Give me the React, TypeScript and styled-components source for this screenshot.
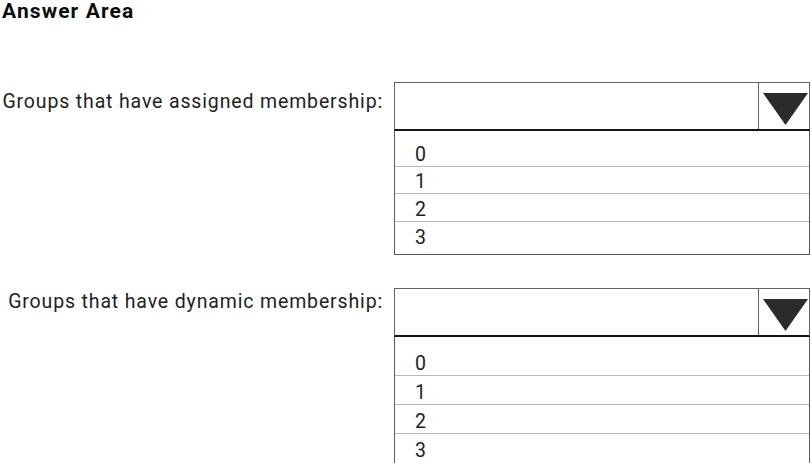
import React from 'react';
import styled, { createGlobalStyle } from 'styled-components';

const GlobalStyle = createGlobalStyle`
  html, body {
    margin: 0;
    padding: 0;
    background: #ffffff;
  }
  body {
    font-family: Roboto, 'Liberation Sans', Arial, sans-serif;
    color: #1c1c1c;
  }
`;

const Page = styled.div`
  width: 811px;
  height: 463px;
  overflow: hidden;
  box-sizing: border-box;
  padding-left: 1px;
`;

const Title = styled.h1`
  margin: 0;
  padding-left: 1px;
  font-size: 21px;
  line-height: 22px;
  letter-spacing: 1.1px;
  font-weight: 700;
  color: #0d0d0d;
`;

const Question = styled.div<{ top: number }>`
  display: flex;
  align-items: flex-start;
  margin-top: ${p => p.top}px;
`;

const Label = styled.div<{ offset: number }>`
  width: 382px;
  margin-right: 11px;
  margin-top: ${p => p.offset}px;
  text-align: right;
  font-size: 19.5px;
  line-height: 22px;
  letter-spacing: 0.85px;
  color: #1e1e1e;
  white-space: nowrap;
`;

const Widget = styled.div`
  width: 416px;
  display: flex;
  flex-direction: column;
`;

const SelectBox = styled.div`
  display: flex;
  height: 46px;
  border: 1px solid #626262;
  border-bottom: 2px solid #141414;
`;

const SelectValue = styled.div`
  flex: 1;
`;

const ArrowCell = styled.div`
  width: 51px;
  border-left: 1px solid #626262;
  display: flex;
  align-items: center;
  justify-content: center;
  padding: 5px 0 0 3px;
  box-sizing: border-box;
`;

const OptionList = styled.div<{ padTop: number; padBottom: number }>`
  border: 1px solid #5a5a5a;
  border-top: none;
  padding: ${p => p.padTop}px 0 ${p => p.padBottom}px;
`;

const OptionRow = styled.div<{ h: number }>`
  height: ${p => p.h}px;
  box-sizing: border-box;
  display: flex;
  align-items: center;
  padding: 5px 0 0 20px;
  font-size: 19.5px;
  line-height: 20px;
  letter-spacing: 0.5px;
  color: #1e1e1e;
  border-bottom: 1px solid #b8b8b8;

  &:last-child {
    border-bottom: none;
  }
`;

const Arrow = () => (
  <svg width="45" height="32" viewBox="0 0 45 32">
    <polygon points="0,0 45,0 22.5,32" fill="#2b2b2b" />
  </svg>
);

type Q = {
  label: string;
  top: number;
  offset: number;
  rowH: number;
  padTop: number;
  padBottom: number;
};

const questions: Q[] = [
  { label: 'Groups that have assigned membership:', top: 60, offset: 9, rowH: 27.5, padTop: 8, padBottom: 5 },
  { label: 'Groups that have dynamic membership:', top: 33, offset: 3, rowH: 29, padTop: 10, padBottom: 4 },
];

const options = ['0', '1', '2', '3'];

export default function App() {
  return (
    <Page>
      <GlobalStyle />
      <Title>Answer Area</Title>
      {questions.map(q => (
        <Question key={q.label} top={q.top}>
          <Label offset={q.offset}>{q.label}</Label>
          <Widget>
            <SelectBox>
              <SelectValue />
              <ArrowCell>
                <Arrow />
              </ArrowCell>
            </SelectBox>
            <OptionList padTop={q.padTop} padBottom={q.padBottom}>
              {options.map(o => (
                <OptionRow key={o} h={q.rowH}>{o}</OptionRow>
              ))}
            </OptionList>
          </Widget>
        </Question>
      ))}
    </Page>
  );
}
